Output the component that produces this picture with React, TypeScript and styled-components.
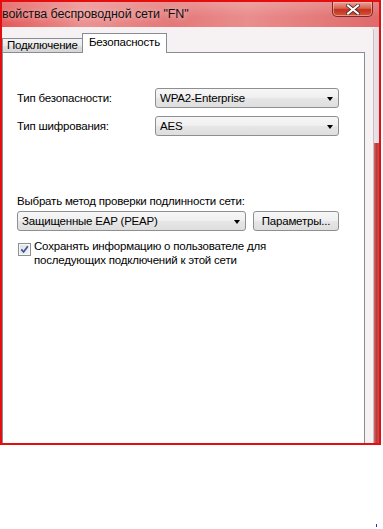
import React from 'react';
import styled, { createGlobalStyle } from 'styled-components';

const GlobalStyle = createGlobalStyle`
  html, body {
    margin: 0;
    padding: 0;
    background: #ffffff;
  }
  body {
    font-family: 'Liberation Sans', Arial, sans-serif;
    font-size: 11.5px;
    letter-spacing: -0.2px;
    color: #000;
  }
`;

/** Window */
const Window = styled.div`
  width: 381px;
  height: 445px;
  box-sizing: border-box;
  border: 2px solid #e50e0e;
  display: flex;
  flex-direction: column;
  overflow: hidden;
`;

/** TitleBar */
const TitleBar = styled.div`
  height: 25px;
  flex-shrink: 0;
  display: flex;
  justify-content: space-between;
  align-items: flex-start;
  background:
    linear-gradient(180deg, rgba(255, 255, 255, 0.18) 0%, rgba(255, 255, 255, 0) 60%),
    linear-gradient(90deg, #e45a5a 0%, #ec9191 22%, #e47878 45%, #ea8d8d 65%, #df6a6a 100%);
`;

const Title = styled.span`
  padding: 5px 0 0 0;
  font-size: 12.5px;
  letter-spacing: -0.1px;
  line-height: 15px;
  white-space: nowrap;
  color: #111;
  text-shadow: 0 0 6px rgba(255, 235, 235, 0.9);
`;

const CloseButton = styled.div`
  width: 41px;
  height: 15px;
  margin-right: 6px;
  box-sizing: border-box;
  border: 1px solid #7a2a2a;
  border-top: none;
  border-radius: 0 0 5px 5px;
  display: flex;
  align-items: center;
  justify-content: center;
  background: linear-gradient(180deg, #e9a49a 0%, #d8614f 45%, #c2301c 55%, #d5563c 100%);
  box-shadow: inset 0 0 0 1px rgba(255, 210, 200, 0.5);
`;

/** Frame */
const Frame = styled.div`
  flex: 1;
  min-height: 0;
  display: flex;
`;

const Client = styled.div`
  flex: 1;
  display: flex;
  flex-direction: column;
  padding: 6px 8px 0 0;
  background: #f6f1f2;
  border-right: 1px solid #cdbcc0;
  border-top-right-radius: 4px;
`;

const FrameEdge = styled.div`
  width: 5px;
  display: flex;
  flex-direction: column;
`;

const EdgePart = styled.div<{ $dark?: boolean }>`
  flex: ${p => (p.$dark ? 1 : '0 0 116px')};
  background: ${p =>
    p.$dark
      ? 'linear-gradient(90deg, #d46a6a 0%, #b83a3a 50%, #c45050 100%)'
      : 'linear-gradient(90deg, #f0dfe4 0%, #dfe2ec 50%, #ecd8dc 100%)'};
`;

/** Tabs */
const TabStrip = styled.div`
  height: 20px;
  display: flex;
  align-items: flex-end;
  margin-bottom: -1px;
  position: relative;
  z-index: 1;
`;

const Tab = styled.div<{ $active?: boolean; $width: number }>`
  width: ${p => p.$width}px;
  box-sizing: border-box;
  border: 1px solid #898c95;
  border-bottom: ${p => (p.$active ? 'none' : '1px solid #898c95')};
  margin-left: ${p => (p.$active ? '-1px' : '0')};
  height: ${p => (p.$active ? 20 : 15)}px;
  padding-left: ${p => (p.$active ? 6 : 4)}px;
  line-height: ${p => (p.$active ? 16 : 13)}px;
  background: ${p =>
    p.$active ? '#ffffff' : 'linear-gradient(180deg, #f3f3f3 0%, #ebebeb 50%, #dedede 51%, #d6d6d6 100%)'};
  white-space: nowrap;
`;

/** Panel */
const Panel = styled.div`
  flex: 1;
  background: #ffffff;
  border: 1px solid #898c95;
  border-bottom: none;
  padding: 35px 0 0 14px;
  display: flex;
  flex-direction: column;
`;

const FieldRow = styled.div<{ $gap?: number }>`
  display: flex;
  align-items: center;
  height: 20px;
  margin-top: ${p => p.$gap ?? 0}px;
`;

const Label = styled.span`
  width: 138px;
  line-height: 15px;
  white-space: nowrap;
`;

const SectionLabel = styled.div`
  margin-top: 58px;
  line-height: 15px;
  white-space: nowrap;
`;

const Select = styled.div<{ $width: number }>`
  width: ${p => p.$width}px;
  height: 20px;
  box-sizing: border-box;
  border: 1px solid #8d8f93;
  border-radius: 3px;
  padding: 0 5px 0 4px;
  display: flex;
  align-items: center;
  justify-content: space-between;
  background: linear-gradient(180deg, #f7f7f7 0%, #efefef 48%, #e6e6e6 52%, #dedede 100%);
  white-space: nowrap;
`;

const Arrow = styled.span`
  width: 0;
  height: 0;
  border-left: 3.5px solid transparent;
  border-right: 3.5px solid transparent;
  border-top: 4px solid #000;
  margin-top: 1px;
`;

const Button = styled.div`
  width: 86px;
  height: 20px;
  box-sizing: border-box;
  margin-left: 7px;
  border: 1px solid #8d8f93;
  border-radius: 3px;
  display: flex;
  align-items: center;
  justify-content: center;
  background: linear-gradient(180deg, #f7f7f7 0%, #efefef 48%, #e6e6e6 52%, #dedede 100%);
  white-space: nowrap;
`;

const CheckRow = styled.div`
  display: flex;
  align-items: flex-start;
  margin-top: 8px;
`;

const CheckBox = styled.div`
  width: 13px;
  height: 13px;
  box-sizing: border-box;
  margin: 4px 3px 0 1px;
  border: 1px solid #8e8f8f;
  background: linear-gradient(135deg, #dcdfe6 0%, #f4f5f7 100%);
  box-shadow: inset 0 0 0 1px #f8f8f8;
  display: flex;
  align-items: center;
  justify-content: center;
`;

const CheckText = styled.span`
  line-height: 14px;
`;

/** Below the window */
const Stray = styled.div`
  width: 1px;
  height: 3px;
  margin: 79px 0 0 376px;
  background: #2a2ad0;
`;

const CloseGlyph = () => (
  <svg width="14" height="11" viewBox="0 0 14 11">
    <path d="M2 1.5 L12 9.5 M12 1.5 L2 9.5" stroke="#4a2a2a" strokeWidth="3.6" strokeLinecap="square" />
    <path d="M2 1.5 L12 9.5 M12 1.5 L2 9.5" stroke="#ffffff" strokeWidth="2" strokeLinecap="square" />
  </svg>
);

const CheckMark = () => (
  <svg width="9" height="9" viewBox="0 0 9 9">
    <path d="M1.3 4.4 L3.6 7 L7.8 1.2" fill="none" stroke="#3c5597" strokeWidth="1.7" />
  </svg>
);

const App: React.FC = () => (
  <>
    <GlobalStyle />
    <Window>
      <TitleBar>
        <Title>войства беспроводной сети "FN"</Title>
        <CloseButton>
          <CloseGlyph />
        </CloseButton>
      </TitleBar>
      <Frame>
        <Client>
          <TabStrip>
            <Tab $width={81}>Подключение</Tab>
            <Tab $width={85} $active>
              Безопасность
            </Tab>
          </TabStrip>
          <Panel>
            <FieldRow>
              <Label>Тип безопасности:</Label>
              <Select $width={184}>
                WPA2-Enterprise
                <Arrow />
              </Select>
            </FieldRow>
            <FieldRow $gap={8}>
              <Label>Тип шифрования:</Label>
              <Select $width={184}>
                AES
                <Arrow />
              </Select>
            </FieldRow>
            <SectionLabel>Выбрать метод проверки подлинности сети:</SectionLabel>
            <FieldRow $gap={2}>
              <Select $width={229}>
                Защищенные EAP (PEAP)
                <Arrow />
              </Select>
              <Button>Параметры...</Button>
            </FieldRow>
            <CheckRow>
              <CheckBox>
                <CheckMark />
              </CheckBox>
              <CheckText>
                Сохранять информацию о пользователе для
                <br />
                последующих подключений к этой сети
              </CheckText>
            </CheckRow>
          </Panel>
        </Client>
        <FrameEdge>
          <EdgePart />
          <EdgePart $dark />
        </FrameEdge>
      </Frame>
    </Window>
    <Stray />
  </>
);

export default App;
